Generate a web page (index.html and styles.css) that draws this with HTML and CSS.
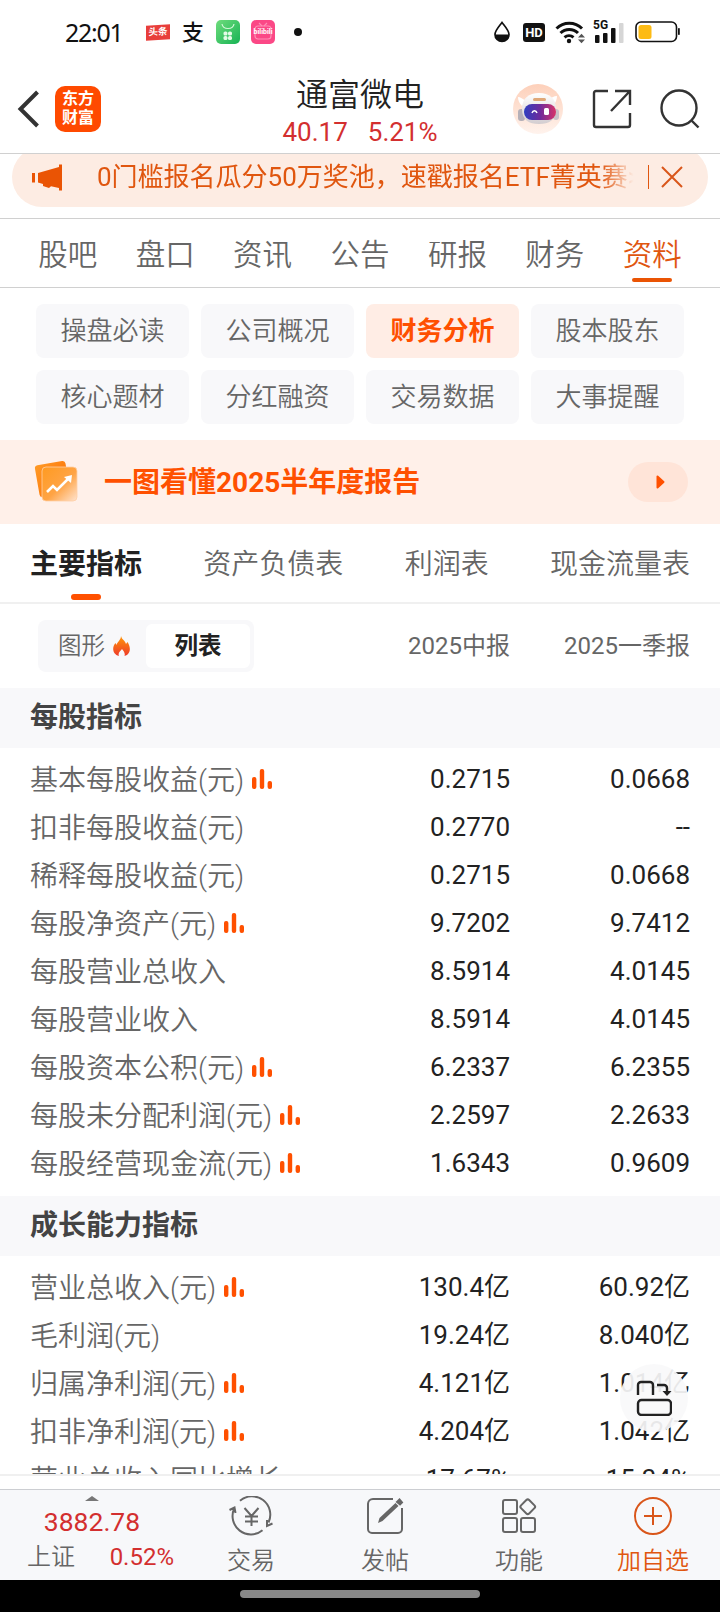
FILE: index.html
```
<!DOCTYPE html>
<html lang="zh-CN">
<head>
  <meta charset="UTF-8" />
  <meta name="viewport" content="width=device-width, initial-scale=1.0"/>
  <title>通富微电 - 财务分析</title>
  <link rel="stylesheet" href="styles.css">
</head>
<body>

  <svg class="defs" width="0" height="0">
    <symbol id="bars" viewBox="0 0 20 20">
      <rect x="0" y="8" width="4.4" height="12" rx="2"/>
      <rect x="7.8" y="0" width="4.4" height="20" rx="2"/>
      <rect x="15.6" y="12" width="4.4" height="8" rx="2"/>
    </symbol>
  </svg>

  <!-- Status bar -->
  <div class="status-bar">
    <div class="status-left">
      <span class="clock">22:01</span>
      <span class="app-toutiao">头条</span>
      <span class="app-alipay">支</span>
      <svg class="app-icon" viewBox="0 0 24 24">
        <defs><linearGradient id="green" x1="0" y1="0" x2="1" y2="1"><stop offset="0" stop-color="#6fdc7c"/><stop offset="1" stop-color="#16b354"/></linearGradient></defs>
        <rect width="24" height="24" rx="5" fill="url(#green)"/>
        <path d="M6 4c1 6 11 6 12 0" fill="none" stroke="#d4f7d8" stroke-width="1.2"/>
        <g fill="#e4fbe6"><rect x="7.5" y="11.5" width="4" height="4" rx="1.6"/><rect x="12" y="11.5" width="4" height="4" rx="1.6"/><rect x="7.5" y="16" width="4" height="4" rx="1.6"/><rect x="12" y="16" width="4" height="4" rx="1.6"/></g>
      </svg>
      <span class="app-bili">
        <svg viewBox="0 0 24 24"><path d="M8 3l3 3M16 3l-3 3" stroke="#ff8db5" stroke-width="1.2"/><rect x="4" y="6" width="16" height="13" rx="3" fill="none" stroke="#ff8db5" stroke-width="1.2"/></svg>
        <b>bilibili</b>
      </span>
      <i class="dot"></i>
    </div>
    <div class="status-right">
      <svg width="18" height="22" viewBox="0 0 18 22"><path d="M9 1.500C5.500 6 2 9.500 2 13.500a7 7 0 0 0 14 0C16 9.500 12.500 6 9 1.500z" fill="none" stroke="#111" stroke-width="1.700"/><path d="M2 13.500h14a7 7 0 0 1-14 0z" fill="#111"/></svg>
      <span class="hd">HD</span>
      <svg class="wifi" width="30" height="24" viewBox="0 0 30 24">
        <g fill="none" stroke="#111" stroke-width="3"><path d="M1.500 8.500a18 18 0 0 1 25.500 0"/><path d="M5.500 13a12.500 12.500 0 0 1 17.500 0"/><path d="M9.500 17.300a7 7 0 0 1 9 0"/></g>
        <circle cx="14" cy="21" r="2.200" fill="#111"/>
        <path d="M23 17.500l3.500-3.800 3.500 3.800zM23 19.500l3.500 3.800 3.500-3.800z" fill="#555"/>
      </svg>
      <div class="signal">
        <span>5G</span>
        <svg width="31" height="22" viewBox="0 0 31 22"><g fill="#111"><rect x="2" y="14" width="4.500" height="8" rx="1"/><rect x="10" y="12" width="4.500" height="10" rx="1"/><rect x="18" y="7" width="4.500" height="15" rx="1"/></g><rect x="26" y="2" width="4.500" height="20" rx="1" fill="#d6d6d6"/></svg>
      </div>
      <svg width="45" height="22" viewBox="0 0 45 22"><rect x="1" y="1" width="40.500" height="19.500" rx="5" fill="none" stroke="#111" stroke-width="1.600"/><rect x="3.500" y="4" width="13" height="14" rx="2.500" fill="#fdbb14"/><rect x="43" y="7" width="1.800" height="7" rx=".8" fill="#111"/></svg>
    </div>
  </div>

  <!-- Header -->
  <header class="header">
    <div class="header-left">
      <svg width="22" height="38" viewBox="0 0 22 38"><path d="M20.500 2L3.500 19l17 17" fill="none" stroke="#333" stroke-width="4"/></svg>
      <div class="logo">东方<br>财富</div>
    </div>
    <div class="stock">
      <h1>通富微电</h1>
      <p><span>40.17</span><span>5.21%</span></p>
    </div>
    <div class="header-right">
      <svg width="50" height="50" viewBox="0 0 50 50">
        <defs>
          <linearGradient id="peach" x1="0" y1="0" x2="0" y2="1"><stop offset="0" stop-color="#fdd0ba"/><stop offset="1" stop-color="#fff3ed"/></linearGradient>
          <linearGradient id="visor" x1="0" y1="0" x2="1" y2="0"><stop offset="0" stop-color="#2d3fc0"/><stop offset=".5" stop-color="#6e2a9c"/><stop offset="1" stop-color="#d83468"/></linearGradient>
          <linearGradient id="shell" x1="0" y1="0" x2="0" y2="1"><stop offset="0" stop-color="#fff"/><stop offset="1" stop-color="#d3cdd0"/></linearGradient>
        </defs>
        <circle cx="25" cy="25" r="25" fill="url(#peach)"/>
        <path d="M5 13c2 0 5 2 8 4l-4 5c-3-3-4-6-4-9zM44 12c-3 0-6 2-9 4l5 6c3-4 4-7 4-10z" fill="#fff"/>
        <rect x="5" y="25" width="7" height="12" rx="3" fill="#b5b0b8"/><rect x="40" y="25" width="6" height="11" rx="3" fill="#c9c3c8"/>
        <path d="M9 25c0-11 7-16 17-16s17 5 17 16c0 11-7 15-17 15S9 36 9 25z" fill="url(#shell)"/>
        <rect x="20" y="14" width="13" height="3" rx="1.500" fill="#e0a878"/>
        <rect x="11" y="20" width="32" height="16" rx="8" fill="url(#visor)"/>
        <path d="M19 29c1-3 4-3 5 0" fill="none" stroke="#fff" stroke-width="1.500"/><rect x="31" y="24" width="5" height="7" rx="1.500" fill="#fff"/>
      </svg>
      <svg width="40" height="40" viewBox="0 0 40 40" fill="none" stroke="#333" stroke-width="2.400">
        <path d="M16 2H4a2 2 0 0 0-2 2v32a2 2 0 0 0 2 2h32a2 2 0 0 0 2-2V24M23 2h15v14M38 2L19 22"/>
      </svg>
      <svg width="40" height="40" viewBox="0 0 40 40" fill="none" stroke="#333" stroke-width="2.400">
        <circle cx="19" cy="19" r="17.500"/><path d="M31.500 31.500l7 7"/>
      </svg>
    </div>
  </header>

  <!-- Scrolling notice -->
  <div class="notice-wrap">
    <div class="notice">
      <svg class="horn" width="30" height="27" viewBox="0 0 30 27" fill="#ea5404"><rect x="0" y="9" width="3" height="9.500"/><path d="M6 9L27 3V.5h3v26h-3V24l-8-1.800-2 1.800-6-2v-2l-5-1.500z"/></svg>
      <div class="notice-text">0门槛报名瓜分50万奖池，速戳报名ETF菁英赛&gt;</div>
      <i class="notice-line"></i>
      <svg width="22" height="22" viewBox="0 0 22 22"><path d="M1 1l20 20M21 1L1 21" stroke="#d9561a" stroke-width="2"/></svg>
    </div>
  </div>

  <nav class="tabs">
    <a>股吧</a>
    <a>盘口</a>
    <a>资讯</a>
    <a>公告</a>
    <a>研报</a>
    <a>财务</a>
    <a class="active">资料</a>
  </nav>

  <div class="chips">
    <a>操盘必读</a>
    <a>公司概况</a>
    <a class="active">财务分析</a>
    <a>股本股东</a>
    <a>核心题材</a>
    <a>分红融资</a>
    <a>交易数据</a>
    <a>大事提醒</a>
  </div>

  <div class="report-banner">
    <svg width="44" height="44" viewBox="0 0 44 44">
      <defs>
        <linearGradient id="card" x1="0" y1="0" x2="1" y2="1"><stop offset="0" stop-color="#ff9a26"/><stop offset="1" stop-color="#fb6a00"/></linearGradient>
        <linearGradient id="glass" x1="0" y1="0" x2="1" y2="1"><stop offset="0" stop-color="#ff9a20"/><stop offset=".55" stop-color="#ffa445"/><stop offset="1" stop-color="#ffe3cf"/></linearGradient>
      </defs>
      <rect x="3" y="3" width="31" height="32" rx="3" fill="url(#card)" transform="rotate(-10 18 19)"/>
      <rect x="8" y="7" width="35" height="34" rx="4" fill="url(#glass)" stroke="#ffcfa6" stroke-width=".8"/>
      <path d="M13 32l6-6 4 4 11-11" fill="none" stroke="#fff" stroke-width="2.600"/><path d="M38 15l-1 8-7-6z" fill="#fff"/>
    </svg>
    <strong>一图看懂2025半年度报告</strong>
    <span class="go"><svg width="9" height="14" viewBox="0 0 9 14"><path d="M1.500 1.500v11L7.500 7z" fill="#ff5000" stroke="#ff5000" stroke-width="2" stroke-linejoin="round"/></svg></span>
  </div>

  <nav class="sub-tabs">
    <a class="active">主要指标</a>
    <a>资产负债表</a>
    <a>利润表</a>
    <a>现金流量表</a>
  </nav>

  <main class="content">
    <div class="table-head">
      <div class="switch">
        <span>图形
          <svg width="17" height="21" viewBox="0 0 17 21"><defs><linearGradient id="fire" x1="0" y1="0" x2="0" y2="1"><stop offset="0" stop-color="#ff9708"/><stop offset="1" stop-color="#ee3a2a"/></linearGradient></defs><path d="M8 0c1 4 4 4 5 8l1.500-2C18 11 18 18 11.500 20c1-3-1-5-2.500-7-1.500 2-4.500 4-3 7C-1 18-1 11 2.500 7l1 2C4 6 8 4 8 0z" fill="url(#fire)"/></svg>
        </span>
        <span class="on">列表</span>
      </div>
      <span class="period">2025中报</span>
      <span class="period">2025一季报</span>
    </div>

    <h2>每股指标</h2>
    <div class="rows">
      <div class="row"><span class="label">基本每股收益(元)<svg class="bars"><use href="#bars"/></svg></span><span>0.2715</span><span>0.0668</span></div>
      <div class="row"><span class="label">扣非每股收益(元)</span><span>0.2770</span><span>--</span></div>
      <div class="row"><span class="label">稀释每股收益(元)</span><span>0.2715</span><span>0.0668</span></div>
      <div class="row"><span class="label">每股净资产(元)<svg class="bars"><use href="#bars"/></svg></span><span>9.7202</span><span>9.7412</span></div>
      <div class="row"><span class="label">每股营业总收入</span><span>8.5914</span><span>4.0145</span></div>
      <div class="row"><span class="label">每股营业收入</span><span>8.5914</span><span>4.0145</span></div>
      <div class="row"><span class="label">每股资本公积(元)<svg class="bars"><use href="#bars"/></svg></span><span>6.2337</span><span>6.2355</span></div>
      <div class="row"><span class="label">每股未分配利润(元)<svg class="bars"><use href="#bars"/></svg></span><span>2.2597</span><span>2.2633</span></div>
      <div class="row"><span class="label">每股经营现金流(元)<svg class="bars"><use href="#bars"/></svg></span><span>1.6343</span><span>0.9609</span></div>
    </div>

    <h2>成长能力指标</h2>
    <div class="rows">
      <div class="row"><span class="label">营业总收入(元)<svg class="bars"><use href="#bars"/></svg></span><span>130.4亿</span><span>60.92亿</span></div>
      <div class="row"><span class="label">毛利润(元)</span><span>19.24亿</span><span>8.040亿</span></div>
      <div class="row"><span class="label">归属净利润(元)<svg class="bars"><use href="#bars"/></svg></span><span>4.121亿</span><span>1.014亿</span></div>
      <div class="row"><span class="label">扣非净利润(元)<svg class="bars"><use href="#bars"/></svg></span><span>4.204亿</span><span>1.042亿</span></div>
      <div class="row"><span class="label">营业总收入同比增长</span><span>17.67%</span><span>15.34%</span></div>
    </div>

    <button class="rotate-btn" aria-label="横屏">
      <svg width="36" height="36" viewBox="0 0 36 36" fill="none" stroke="#222" stroke-width="2.400"><path d="M2 15V5a3 3 0 0 1 3-3h9a3 3 0 0 1 3 3v10M21 5h7a3 3 0 0 1 3 3v4"/><rect x="2" y="20" width="33" height="15" rx="3.500"/><path d="M26.500 11h9L31 16z" fill="#222" stroke="none"/></svg>
    </button>
  </main>

  <footer class="bottom-bar">
    <div class="index">
      <i class="up"></i>
      <b>3882.78</b>
      <p><span>上证</span><em>0.52%</em></p>
    </div>
    <a>
      <svg width="44" height="40" viewBox="0 0 44 40" fill="none" stroke="#666" stroke-width="2"><path d="M11 4.800A18.300 18.300 0 0 1 39.500 26.500M33.500 34.200A18.300 18.300 0 0 1 5.200 12.500M.5 14l5-2.500 1 5.500M43.500 27.500L38 30v-6M15.500 12l7 8 7-8M22.500 20v10M16 20.500h13M16 25.500h13"/></svg>
      交易
    </a>
    <a>
      <svg width="40" height="40" viewBox="0 0 40 40" fill="none" stroke="#666" stroke-width="2"><path d="M28 3H8a5 5 0 0 0-5 5v25a4 4 0 0 0 4 4h26a4 4 0 0 0 4-4V12"/><path d="M13 27l1.500-5L30.500 7l3 3-16 15z" fill="#666" stroke="none"/><path d="M32 6l2.500-2.500 2.500 3-2 2z" fill="#666"/></svg>
      发帖
    </a>
    <a>
      <svg width="40" height="40" viewBox="0 0 40 40" fill="none" stroke="#666" stroke-width="2"><rect x="4" y="4" width="14" height="14" rx="2"/><rect x="4" y="22" width="14" height="14" rx="2"/><rect x="22" y="22" width="14" height="14" rx="2"/><rect x="23" y="5" width="11.500" height="11.500" rx="2" transform="rotate(45 28.750 10.750)"/></svg>
      功能
    </a>
    <a class="add">
      <svg width="40" height="40" viewBox="0 0 40 40" fill="none" stroke="#d9561a" stroke-width="2"><circle cx="20" cy="20" r="18"/><path d="M20 11v18M11 20h18"/></svg>
      加自选
    </a>
  </footer>
  <div class="gesture"><i></i></div>

</body>
</html>
```
FILE: styles.css
```
:root {
  --orange: #ff5000;
  --orange-dark: #e0560f;
  --red: #d32f2f;
  --gray: #666;
  --dark: #222;
  --panel: #f8f8fa;
}

* {
  box-sizing: border-box;
}

body {
  margin: 0;
  width: 720px;
  height: 1612px;
  overflow: hidden;
  display: flex;
  flex-direction: column;
  background: #fff;
  color: var(--gray);
  font-family: Roboto, "Noto Sans CJK SC", sans-serif;
  font-weight: 350;
}

svg {
  display: block;
  flex: none;
}

h1, h2, p {
  margin: 0;
}

.defs {
  position: absolute;
}

/* status bar */
.status-bar {
  height: 64px;
  flex: none;
  display: flex;
  justify-content: space-between;
  align-items: center;
  padding: 0 40px 0 65px;
  color: #111;
}

.status-left,
.status-right {
  display: flex;
  align-items: center;
}

.clock {
  width: 81px;
  font: 400 25px/30px "Noto Sans", sans-serif;
  letter-spacing: -1.3px;
}

.app-toutiao {
  width: 24px;
  height: 15px;
  background: #e83e3b;
  color: #fff;
  font-size: 9.5px;
  font-weight: 700;
  line-height: 14px;
  text-align: center;
  transform: skewY(-3deg);
}

.app-alipay {
  width: 23px;
  margin: 0 11px 0 12px;
  padding-top: 2px;
  font-size: 22px;
  line-height: 24px;
  font-weight: 500;
}

.app-icon {
  width: 24px;
  height: 24px;
}

.app-bili {
  display: grid;
  place-items: center;
  width: 24px;
  height: 24px;
  margin-left: 11px;
  border-radius: 5px;
  background: #fb4886;
  color: #fff;
  overflow: hidden;
}

.app-bili svg,
.app-bili b {
  grid-area: 1 / 1;
}

.app-bili b {
  font-size: 7px;
  line-height: 10px;
}

.dot {
  width: 8px;
  height: 8px;
  margin-left: 19px;
  border-radius: 50%;
  background: #111;
}

.hd {
  width: 22px;
  height: 19px;
  margin: 0 10px 0 12px;
  border-radius: 3px;
  background: #111;
  color: #fff;
  font-size: 13px;
  font-weight: 700;
  line-height: 19px;
  text-align: center;
}

.signal {
  display: grid;
  margin: 0 11px 0 8px;
}

.signal span,
.signal svg {
  grid-area: 1 / 1;
}

.signal span {
  z-index: 1;
  width: 16px;
  height: 11px;
  margin-top: -1px;
  font-size: 12px;
  font-weight: 700;
  line-height: 11px;
}

/* header */
.header {
  height: 90px;
  flex: none;
  display: grid;
  grid-template-columns: 220px 1fr 220px;
  border-bottom: 1px solid #d0d0d0;
}

.header-left {
  display: flex;
  align-items: center;
  gap: 16px;
  padding-left: 17px;
}

.logo {
  width: 46px;
  height: 46px;
  padding-top: 3px;
  border-radius: 10px;
  background: #ff4a00;
  color: #fff;
  font-size: 16px;
  font-weight: 700;
  line-height: 19.5px;
  text-align: center;
}

.stock {
  text-align: center;
}

.stock h1 {
  margin-top: 11px;
  color: var(--dark);
  font-size: 32px;
  font-weight: 350;
  line-height: 40px;
}

.stock p {
  display: flex;
  justify-content: center;
  gap: 20px;
  color: var(--red);
  font-size: 26px;
  font-weight: 400;
  line-height: 35px;
}

.header-right {
  display: flex;
  align-items: center;
  justify-content: flex-end;
  gap: 28.5px;
  padding-right: 20px;
}

/* notice */
.notice-wrap {
  height: 65px;
  flex: none;
  padding: 0 12px;
  overflow: hidden;
  border-bottom: 1px solid #d0d0d0;
}

.notice {
  height: 60px;
  margin-top: -7px;
  padding: 0 25px 0 20px;
  display: flex;
  align-items: center;
  border-radius: 30px;
  background: #fdece3;
  color: var(--orange-dark);
}

.notice-text {
  width: 542px;
  margin: 0 9px 0 35px;
  overflow: hidden;
  white-space: nowrap;
  font-size: 26px;
  font-weight: 400;
  line-height: 38px;
  mask-image: linear-gradient(to right, #000 93%, transparent 99%);
}

.notice-line {
  width: 1px;
  height: 24px;
  margin-right: 12px;
  background: var(--orange-dark);
}

/* tabs */
.tabs {
  height: 69px;
  flex: none;
  display: flex;
  padding: 0 19px 0 19px;
  border-bottom: 1px solid #d0d0d0;
}

.tabs a {
  flex: 1;
  display: flex;
  flex-direction: column;
  align-items: center;
  font-size: 29.5px;
  line-height: 73px;
}

.tabs .active {
  color: var(--orange-dark);
}

.tabs .active::after {
  content: "";
  width: 40px;
  height: 4px;
  margin-top: -14px;
  border-radius: 2px;
  background: #ea5404;
}

.chips {
  height: 152px;
  flex: none;
  display: grid;
  grid-template-columns: repeat(4, 1fr);
  grid-auto-rows: 54px;
  gap: 12px;
  padding: 16px 36px;
}

.chips a {
  border-radius: 8px;
  background: var(--panel);
  font-size: 26px;
  line-height: 54px;
  text-align: center;
}

.chips .active {
  background: #ffede5;
  color: var(--orange);
  font-weight: 700;
}

.report-banner {
  height: 84px;
  flex: none;
  display: flex;
  align-items: center;
  padding: 0 32px 0 34px;
  background: #fff0e9;
}

.report-banner strong {
  flex: 1;
  margin-left: 26px;
  padding-top: 2px;
  color: var(--orange);
  font-size: 28px;
  line-height: 40px;
}

.go {
  width: 60px;
  height: 40px;
  display: flex;
  align-items: center;
  justify-content: center;
  padding-left: 5px;
  border-radius: 20px;
  background: #ffe4d8;
}

.sub-tabs {
  height: 80px;
  flex: none;
  display: flex;
  justify-content: space-between;
  padding: 0 30px;
  border-bottom: 2px solid #f0f0f0;
  font-size: 28px;
  line-height: 82px;
}

.sub-tabs .active {
  display: flex;
  flex-direction: column;
  align-items: center;
  color: var(--dark);
  font-weight: 700;
}

.sub-tabs .active::after {
  content: "";
  width: 30px;
  height: 6px;
  margin-top: -12px;
  border-radius: 3px;
  background: var(--orange);
}

/* indicator table */
.content {
  position: relative;
  height: 872px;
  flex: none;
  overflow: hidden;
  border-bottom: 2px solid #f0f0f0;
}

.table-head,
.row {
  display: grid;
  grid-template-columns: 300px 180px 180px;
  align-items: center;
  padding: 0 30px;
  text-align: right;
}

.table-head {
  height: 84px;
}

.switch {
  display: flex;
  width: 216px;
  height: 52px;
  margin-left: 8px;
  padding: 4px;
  border-radius: 8px;
  background: var(--panel);
  font-size: 23.5px;
  line-height: 45px;
}

.switch span {
  width: 104px;
  display: flex;
  align-items: center;
  justify-content: center;
  gap: 8px;
}

.switch .on {
  border-radius: 6px;
  background: #fff;
  color: var(--dark);
  font-weight: 700;
}

.period {
  font-size: 24px;
  font-weight: 400;
  line-height: 30px;
}

.content h2 {
  height: 60px;
  padding-left: 30px;
  background: var(--panel);
  color: #444;
  font-size: 28px;
  line-height: 60px;
}

.rows {
  padding: 8px 0;
}

.row {
  height: 48px;
  color: var(--dark);
  font-size: 26px;
  font-weight: 400;
  line-height: 44px;
}

.row > span {
  height: 46px;
}

.row .label {
  display: flex;
  align-items: center;
  gap: 8px;
  height: 48px;
  color: var(--gray);
  font-size: 28px;
  font-weight: 350;
  line-height: 49px;
  white-space: nowrap;
}

.bars {
  width: 20px;
  height: 20px;
  margin-top: -2px;
  fill: var(--orange);
}

.rotate-btn {
  position: absolute;
  left: 620px;
  top: 760px;
  width: 68px;
  height: 68px;
  display: grid;
  place-items: center;
  padding: 0;
  border: 0;
  border-radius: 50%;
  background: rgba(248, 248, 250, 0.92);
}

/* bottom bar */
.bottom-bar {
  height: 91px;
  flex: none;
  display: grid;
  grid-template-columns: 184px repeat(4, 134px);
  margin-top: 13px;
  border-top: 1px solid #ccced2;
  background: #f7f8fa;
}

.bottom-bar a {
  display: flex;
  flex-direction: column;
  align-items: center;
  padding-top: 6px;
  font-size: 24px;
  line-height: 51px;
}

.bottom-bar .add {
  color: var(--orange-dark);
}

.index {
  padding-top: 6px;
  color: var(--red);
  text-align: center;
}

.up {
  display: block;
  width: 14px;
  height: 5px;
  margin: 0 auto;
  background: #777;
  clip-path: polygon(50% 0, 100% 100%, 0 100%);
}

.index b {
  display: block;
  font-size: 26.5px;
  font-weight: 400;
  line-height: 42px;
}

.index p {
  display: flex;
  justify-content: space-between;
  padding: 0 10px 0 27px;
  font-size: 24px;
  line-height: 28px;
}

.index p span {
  color: var(--gray);
}

.index em {
  font-style: normal;
  font-weight: 400;
}

.gesture {
  height: 32px;
  flex: none;
  padding-top: 10px;
  background: #000;
}

.gesture i {
  display: block;
  width: 240px;
  height: 8px;
  margin: 0 auto;
  border-radius: 4px;
  background: #888;
}
```
